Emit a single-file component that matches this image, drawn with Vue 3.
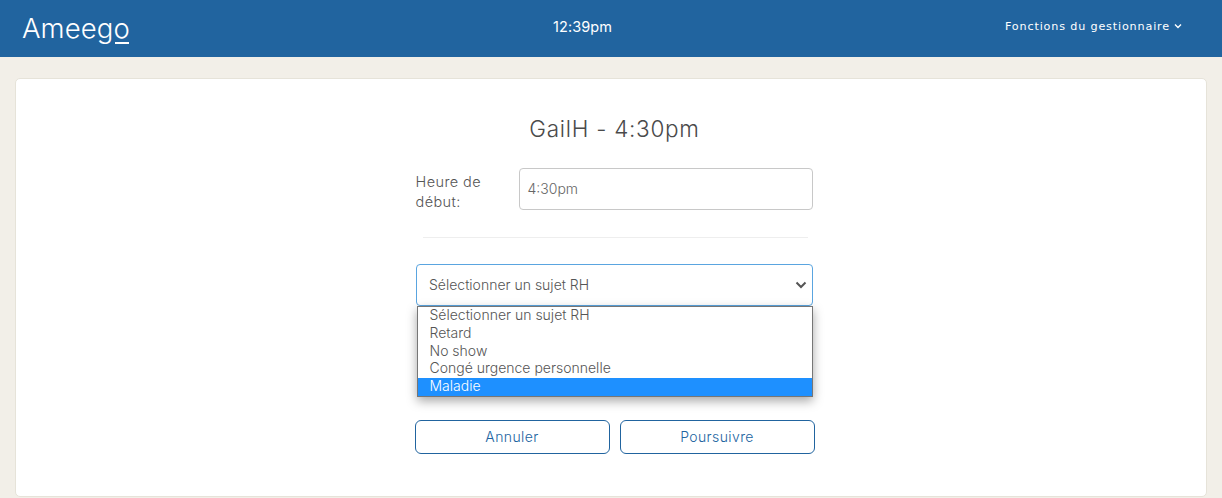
<template>
  <div class="page">
    <header class="topbar">
      <div class="logo">Ameeg<span class="logo-o">o</span></div>
      <div class="clock">12:39pm</div>
      <div class="manager">
        Fonctions du gestionnaire
        <svg class="manager-caret" width="8" height="6" viewBox="0 0 8 6">
          <path d="M1 1.5 L4 4.5 L7 1.5" fill="none" stroke="#fff" stroke-width="1.4" />
        </svg>
      </div>
    </header>

    <main class="content">
      <section class="card">
        <div class="form">
          <h1 class="title">GailH - 4:30pm</h1>

          <div class="field">
            <label class="field-label">Heure de début:</label>
            <div class="field-input">4:30pm</div>
          </div>

          <hr class="divider" />

          <div class="select-wrap">
            <div class="select">
              <span>Sélectionner un sujet RH</span>
              <svg width="12" height="8" viewBox="0 0 12 8">
                <path d="M1.5 1.5 L6 6 L10.5 1.5" fill="none" stroke="#555" stroke-width="2" />
              </svg>
            </div>
            <ul class="menu">
              <li
                v-for="option in options"
                :key="option"
                :class="{ active: option === selected }"
              >
                {{ option }}
              </li>
            </ul>
          </div>

          <div class="actions">
            <button class="btn">Annuler</button>
            <button class="btn">Poursuivre</button>
          </div>
        </div>
      </section>
    </main>
  </div>
</template>

<script setup>
const selected = "Maladie";
const options = [
  "Sélectionner un sujet RH",
  "Retard",
  "No show",
  "Congé urgence personnelle",
  "Maladie",
];
</script>

<style>
html,
body {
  margin: 0;
  background: #f2efe8;
}
</style>

<style scoped>
.page {
  height: 498px;
  overflow: hidden;
  font-family: "Inter", "Lato", sans-serif;
  font-weight: 300;
  color: #555;
}

.topbar {
  height: 57px;
  background: #21649f;
  color: #fff;
  display: grid;
  grid-template-columns: 553px 452px 1fr;
  align-items: center;
}

.logo {
  padding-left: 22px;
  font-size: 27.5px;
  font-weight: 300;
  letter-spacing: 0.1px;
  margin-top: -2px;
}

.logo-o {
  position: relative;
  display: inline-block;
  line-height: 27px;
}

.logo-o::after {
  content: "";
  position: absolute;
  left: 2px;
  right: 1px;
  bottom: -2px;
  height: 2px;
  background: #fff;
}

.clock {
  font-size: 14.5px;
  font-weight: 400;
  letter-spacing: 0.1px;
  margin-top: -4px;
}

.manager {
  font-family: "DejaVu Sans", sans-serif;
  font-weight: 400;
  font-size: 11.2px;
  letter-spacing: 0.83px;
  margin-top: -5px;
  white-space: nowrap;
}

.manager-caret {
  vertical-align: 1px;
}

.content {
  padding: 21px 15px 0;
}

.card {
  height: 419px;
  box-sizing: border-box;
  background: #fff;
  border: 1px solid #e6e3d9;
  border-radius: 5px;
  display: flex;
  justify-content: center;
}

.form {
  width: 400px;
  margin-left: 7px;
}

.title {
  margin: 35px 0 0;
  height: 30px;
  line-height: 30px;
  text-align: center;
  font-size: 22.5px;
  font-weight: 300;
  letter-spacing: 0.72px;
  color: #4a4a4a;
}

.field {
  margin-top: 24px;
  display: flex;
  padding-left: 1px;
}

.field-label {
  width: 103px;
  padding-top: 4px;
  font-size: 14.5px;
  line-height: 20px;
  letter-spacing: 0.4px;
  color: #555;
  box-sizing: border-box;
}

.field-input {
  width: 294px;
  height: 42px;
  box-sizing: border-box;
  border: 1px solid #c8c8c8;
  border-radius: 4px;
  padding-left: 8px;
  line-height: 40px;
  font-size: 14px;
  color: #666;
}

.divider {
  margin: 25px 7px 26px 8px;
  border: 0;
  border-top: 1px solid #eeeeee;
}

.select-wrap {
  position: relative;
  margin-left: 1px;
  width: 397px;
}

.select {
  height: 42px;
  box-sizing: border-box;
  border: 1px solid #5aa5e0;
  border-radius: 4px;
  padding: 0 5px 2px 12.5px;
  display: flex;
  align-items: center;
  justify-content: space-between;
  font-size: 14px;
  color: #555;
}

.select svg {
  margin-top: 2px;
}

.menu {
  position: absolute;
  top: 42px;
  left: 1px;
  right: 0;
  margin: 0;
  padding: 0;
  list-style: none;
  box-sizing: border-box;
  height: 91px;
  background: #fff;
  border: 1px solid #767676;
  box-shadow: 0 4px 10px rgba(0, 0, 0, 0.35);
  font-size: 14px;
  color: #555;
}

.menu li {
  height: 17.75px;
  line-height: 16px;
  padding-left: 12px;
}

.menu li.active {
  background: #1e90ff;
  color: #fff;
}

.actions {
  margin-top: 114px;
  display: grid;
  grid-template-columns: 195px 195px;
  gap: 10px;
}

.btn {
  height: 34px;
  padding-bottom: 3px;
  background: #fff;
  border: 1px solid #21649f;
  border-radius: 6px;
  color: #21649f;
  font-family: inherit;
  font-weight: 300;
  font-size: 14px;
  letter-spacing: 0.4px;
}
</style>
